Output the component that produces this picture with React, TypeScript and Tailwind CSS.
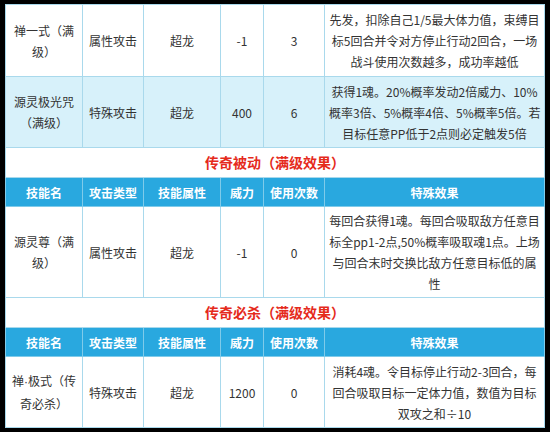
import React from 'react';

type Skill = {
  name: React.ReactNode[];
  kind: string;
  attr: string;
  power: string;
  uses: string;
  effect: string[];
  tint?: boolean;
  h: string;
};

const font = { fontFamily: '"Noto Sans CJK SC", "Noto Sans", sans-serif' };

const Lines = ({ lines }: { lines: React.ReactNode[] }) => (
  <>
    {lines.map((l, i) => (
      <div key={i} className="whitespace-nowrap">
        {l}
      </div>
    ))}
  </>
);

const SkillRow = ({ s }: { s: Skill }) => {
  const bg = s.tint ? 'bg-[#d7f1fa]' : 'bg-white';
  const cell = `border border-[#a9d9ec] ${bg} text-center align-middle`;
  return (
    <tr className={s.h}>
      <td className={`${cell} px-1`}>
        <Lines lines={s.name} />
      </td>
      <td className={cell}>{s.kind}</td>
      <td className={cell}>{s.attr}</td>
      <td className={cell}>{s.power}</td>
      <td className={cell}>{s.uses}</td>
      <td className={`${cell} px-1`}>
        <Lines lines={s.effect} />
      </td>
    </tr>
  );
};

const Title = ({ text }: { text: string }) => (
  <tr className="h-[30px]">
    <td colSpan={6} className="border border-[#a9d9ec] bg-white text-center align-middle text-[14px] font-bold text-[#e52a1c]">
      {text}
    </td>
  </tr>
);

const Header = () => {
  const th = 'border border-[#7fcbea] bg-[#29a8df] text-center align-middle font-bold text-white';
  return (
    <tr className="h-[29px]">
      <td className={th}>技能名</td>
      <td className={th}>攻击类型</td>
      <td className={th}>技能属性</td>
      <td className={th}>威力</td>
      <td className={th}>使用次数</td>
      <td className={th}>特殊效果</td>
    </tr>
  );
};

const top: Skill[] = [
  {
    name: ['禅一式（满', '级）'],
    kind: '属性攻击',
    attr: '超龙',
    power: '-1',
    uses: '3',
    effect: ['先发，扣除自己1/5最大体力值，束缚目', '标5回合并令对方停止行动2回合，一场', '战斗使用次数越多，成功率越低'],
    h: 'h-[72px]',
  },
  {
    name: ['源灵极光咒', '（满级）'],
    kind: '特殊攻击',
    attr: '超龙',
    power: '400',
    uses: '6',
    effect: ['获得1魂。20%概率发动2倍威力、10%', '概率3倍、5%概率4倍、5%概率5倍。若', '目标任意PP低于2点则必定触发5倍'],
    tint: true,
    h: 'h-[71px]',
  },
];

const passive: Skill = {
  name: ['源灵尊（满', '级）'],
  kind: '属性攻击',
  attr: '超龙',
  power: '-1',
  uses: '0',
  effect: ['每回合获得1魂。每回合吸取敌方任意目', '标全pp1-2点,50%概率吸取魂1点。上场', '与回合末时交换比敌方任意目标低的属', '性'],
  h: 'h-[91px]',
};

const ult: Skill = {
  name: [
    <>
      禅<span style={{ fontFamily: '"Liberation Sans", sans-serif' }}>·</span>极式（传
    </>,
    '奇必杀）',
  ],
  kind: '特殊攻击',
  attr: '超龙',
  power: '1200',
  uses: '0',
  effect: ['消耗4魂。令目标停止行动2-3回合，每', '回合吸取目标一定体力值，数值为目标', '双攻之和÷10'],
  h: 'h-[71px]',
};

export default function App() {
  return (
    <div className="h-[432px] w-[550px] overflow-hidden bg-black pl-[5px] pt-[4px]" style={font}>
      <table className="w-[539px] table-fixed border-collapse text-[12px] leading-[21px] text-[#333]">
        <colgroup>
          <col className="w-[77px]" />
          <col className="w-[61px]" />
          <col className="w-[77px]" />
          <col className="w-[43px]" />
          <col className="w-[61px]" />
          <col className="w-[220px]" />
        </colgroup>
        <tbody>
          {top.map((s, i) => (
            <SkillRow key={i} s={s} />
          ))}
          <Title text="传奇被动（满级效果）" />
          <Header />
          <SkillRow s={passive} />
          <Title text="传奇必杀（满级效果）" />
          <Header />
          <SkillRow s={ult} />
        </tbody>
      </table>
    </div>
  );
}
